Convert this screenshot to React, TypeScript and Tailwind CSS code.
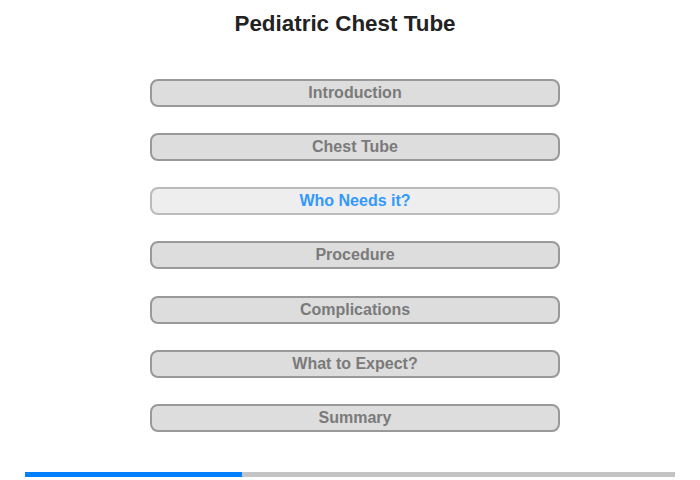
import React from "react";

const items = [
  "Introduction",
  "Chest Tube",
  "Who Needs it?",
  "Procedure",
  "Complications",
  "What to Expect?",
  "Summary",
];

export default function App() {
  return (
    <div
      className="w-[700px] h-[480px] bg-white relative overflow-hidden"
      style={{ fontFamily: '"Liberation Sans", Arial, sans-serif' }}
    >
      <h1 className="pt-[11px] text-center text-[22.4px] leading-[26px] font-bold text-[#222222] mr-[10px]">
        Pediatric Chest Tube
      </h1>
      <div className="mt-[42px] flex flex-col gap-[26.15px] pl-[150px]">
        {items.map((t, i) => {
          const active = i === 2;
          return (
            <div
              key={t}
              className={
                active
                  ? "w-[410px] h-[28px] rounded-[8px] border-2 border-[#bbbbbb] bg-[#eeeeee] flex items-center justify-center text-[16px] font-bold text-[#3399ff]"
                  : "w-[410px] h-[28px] rounded-[8px] border-2 border-[#999999] bg-[#dddddd] flex items-center justify-center text-[16px] font-bold text-[#7a7a7a]"
              }
            >
              {t}
            </div>
          );
        })}
      </div>
      <div className="mt-[40px] ml-[25px] w-[650px] h-[5px] bg-[#c4c4c4] flex">
        <div className="w-[217px] h-full bg-[#0080ff]" />
      </div>
    </div>
  );
}
